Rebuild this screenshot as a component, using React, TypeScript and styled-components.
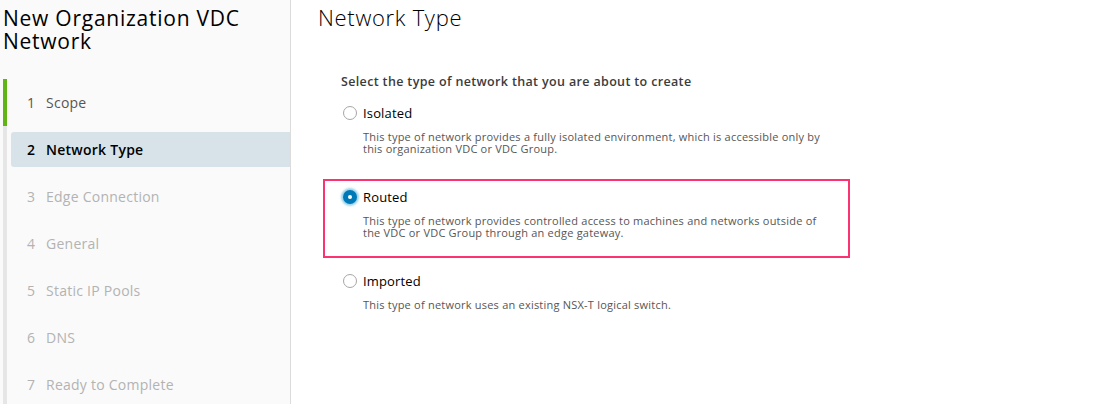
import React from "react";
import styled, { createGlobalStyle, css } from "styled-components";

const Global = createGlobalStyle`
  html, body { margin: 0; padding: 0; background: #fff; }
  body { font-family: "Open Sans", "Liberation Sans", sans-serif; -webkit-font-smoothing: antialiased; }
  * { box-sizing: border-box; }
`;

const Page = styled.div`
  display: flex;
  height: 404px;
  overflow: hidden;
`;

const Sidebar = styled.nav`
  width: 291px;
  flex: none;
  background: #fafafa;
  border-right: 1px solid #dcdcdc;
`;

const Title = styled.h1`
  margin: 0;
  padding: 7px 0 0 3px;
  font-size: 21px;
  font-weight: 400;
  line-height: 23px;
  letter-spacing: 0.75px;
  color: #000;
`;

const Steps = styled.ol`
  list-style: none;
  margin: 26px 0 0 3px;
  padding: 0;
`;

type StepState = "done" | "active" | "disabled";

const Step = styled.li<{ $state: StepState }>`
  height: 47px;
  padding: 6px 0 6px 4px;
  border-left: 4px solid ${(p) => (p.$state === "done" ? "#60b515" : "#e6e6e6")};
`;

const StepButton = styled.div<{ $state: StepState }>`
  display: flex;
  align-items: center;
  height: 35px;
  padding-left: 16px;
  border-radius: 3px 0 0 3px;
  font-size: 14px;
  letter-spacing: 0.25px;
  color: ${(p) => (p.$state === "done" ? "#565656" : p.$state === "active" ? "#000" : "#b3b3b3")};
  ${(p) =>
    p.$state === "active" &&
    css`
      background: #d8e3e9;
      font-weight: 600;
    `}
`;

const StepNum = styled.span`
  width: 19px;
  flex: none;
`;

const Main = styled.main`
  flex: 1;
  padding-left: 27px;
`;

const Heading = styled.h2`
  margin: 3px 0 0;
  font-size: 22px;
  line-height: 28px;
  font-weight: 300;
  letter-spacing: 0.7px;
  color: #000;
`;

const Form = styled.div`
  margin-left: 5px;
  width: 527px;
`;

const Prompt = styled.div`
  margin-top: 43px;
  padding-left: 18px;
  font-size: 12.5px;
  line-height: 16px;
  font-weight: 600;
  letter-spacing: 0.35px;
  color: #3c3c3c;
`;

const Options = styled.div`
  display: flex;
  flex-direction: column;
  gap: 5px;
  margin-top: 5px;
`;

const Option = styled.div<{ $highlight?: boolean }>`
  height: 79px;
  padding: 8px 18px 0;
  border: 2px solid ${(p) => (p.$highlight ? "#fb3371" : "transparent")};
`;

const OptionLabel = styled.label`
  display: flex;
  align-items: center;
  gap: 6px;
  height: 16px;
  font-size: 13px;
  letter-spacing: 0.15px;
  color: #000;
`;

const Radio = styled.span<{ $checked?: boolean }>`
  position: relative;
  width: 14px;
  height: 14px;
  flex: none;
  border-radius: 50%;
  background: #fff;
  ${(p) =>
    p.$checked
      ? css`
          background: #0079b8;
          box-shadow: 0 0 2px 2px rgba(73, 175, 217, 0.55);
          &::after {
            content: "";
            position: absolute;
            left: 5px;
            top: 5px;
            width: 4px;
            height: 4px;
            border-radius: 50%;
            background: #fff;
          }
        `
      : css`
          border: 1px solid #a6a6a6;
        `}
`;

const Desc = styled.p`
  margin: 10px 0 0;
  padding-left: 20px;
  font-size: 11px;
  line-height: 12px;
  letter-spacing: 0.22px;
  color: #565656;
`;

const steps: { n: number; label: string; state: StepState }[] = [
  { n: 1, label: "Scope", state: "done" },
  { n: 2, label: "Network Type", state: "active" },
  { n: 3, label: "Edge Connection", state: "disabled" },
  { n: 4, label: "General", state: "disabled" },
  { n: 5, label: "Static IP Pools", state: "disabled" },
  { n: 6, label: "DNS", state: "disabled" },
  { n: 7, label: "Ready to Complete", state: "disabled" },
];

const options = [
  {
    label: "Isolated",
    lines: [
      "This type of network provides a fully isolated environment, which is accessible only by",
      "this organization VDC or VDC Group.",
    ],
  },
  {
    label: "Routed",
    checked: true,
    lines: [
      "This type of network provides controlled access to machines and networks outside of",
      "the VDC or VDC Group through an edge gateway.",
    ],
  },
  {
    label: "Imported",
    lines: ["This type of network uses an existing NSX-T logical switch."],
  },
];

export default function App() {
  return (
    <>
      <Global />
      <Page>
        <Sidebar>
          <Title>
            New Organization VDC
            <br />
            Network
          </Title>
          <Steps>
            {steps.map((s) => (
              <Step key={s.n} $state={s.state}>
                <StepButton $state={s.state}>
                  <StepNum>{s.n}</StepNum>
                  {s.label}
                </StepButton>
              </Step>
            ))}
          </Steps>
        </Sidebar>
        <Main>
          <Heading>Network Type</Heading>
          <Form>
            <Prompt>Select the type of network that you are about to create</Prompt>
            <Options>
              {options.map((o) => (
                <Option key={o.label} $highlight={o.checked}>
                  <OptionLabel>
                    <Radio $checked={o.checked} />
                    {o.label}
                  </OptionLabel>
                  <Desc>
                    {o.lines.map((l, i) => (
                      <React.Fragment key={i}>
                        {i > 0 && <br />}
                        {l}
                      </React.Fragment>
                    ))}
                  </Desc>
                </Option>
              ))}
            </Options>
          </Form>
        </Main>
      </Page>
    </>
  );
}
